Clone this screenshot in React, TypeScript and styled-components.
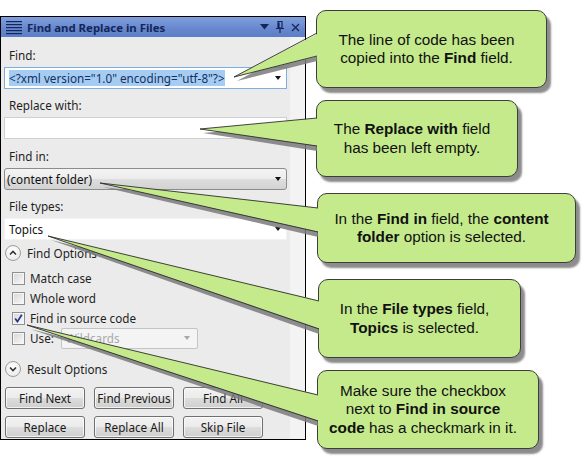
import React from 'react';
import styled, { createGlobalStyle } from 'styled-components';

const Global = createGlobalStyle`
  html, body { margin: 0; padding: 0; background: #fff; }
  body { font-family: "Noto Sans", "Open Sans", sans-serif; }
`;

const Stage = styled.div`
  position: relative;
  width: 587px;
  height: 463px;
  overflow: hidden;
  background: #fff;
  padding-top: 16px;
  box-sizing: border-box;
`;

const Panel = styled.div`
  width: 306px;
  box-sizing: border-box;
  border: 1px solid #000;
  background: #ebebeb;
  display: flex;
  flex-direction: column;
`;

const TitleBar = styled.div`
  height: 20px;
  display: flex;
  align-items: center;
  padding: 0 5px;
  gap: 5px;
  background: linear-gradient(#809fdc, #6687cd 60%, #5c7ec7);
  color: #13265a;
  font-weight: 700;
  font-size: 11.4px;
`;

const Title = styled.span`
  flex: 1;
  white-space: nowrap;
`;

const TitleIcons = styled.div`
  display: flex;
  align-items: center;
  gap: 7px;
`;

const Body = styled.div`
  display: flex;
`;

const Content = styled.div`
  flex: 1;
  display: flex;
  flex-direction: column;
  padding: 9px 3px 1px 3px;
  font-size: 11.7px;
`;

const Strip = styled.div`
  width: 15px;
  background: #f3f3f3;
`;

const Field = styled.div<{ $mt?: number }>`
  display: flex;
  flex-direction: column;
  gap: 3px;
  margin-top: ${(p) => p.$mt ?? 0}px;
`;

const Label = styled.div`
  line-height: 18px;
  height: 18px;
  padding-left: 5px;
  color: #1e1e1e;
`;

const TextBox = styled.div<{ $focus?: boolean; $plain?: boolean }>`
  height: 22px;
  box-sizing: border-box;
  display: flex;
  align-items: center;
  padding: 0 5px 0 4px;
  background: #fff;
  border: 1px solid ${(p) => (p.$focus ? '#7eaee0' : p.$plain ? '#f2f2f2' : '#cfcfcf')};
  color: #111;
  white-space: nowrap;
`;

const Combo = styled.div`
  height: 22px;
  box-sizing: border-box;
  display: flex;
  align-items: center;
  padding: 0 5px 0 2px;
  border: 1px solid #8c8c8c;
  border-radius: 3px;
  background: linear-gradient(#f4f4f4 0%, #ececec 50%, #dedede 50%, #d2d2d2 100%);
  color: #111;
  white-space: nowrap;
`;

const Selected = styled.span`
  background: #a5cdf3;
  color: #15305e;
  line-height: 16px;
`;

const Arrow = styled.span<{ $dim?: boolean }>`
  margin-left: auto;
  width: 0;
  height: 0;
  border-left: 3.5px solid transparent;
  border-right: 3.5px solid transparent;
  border-top: 4px solid ${(p) => (p.$dim ? '#a8a8a8' : '#111')};
`;

const ExpanderRow = styled.div<{ $mt: number }>`
  display: flex;
  align-items: center;
  gap: 6px;
  height: 20px;
  margin-top: ${(p) => p.$mt}px;
  padding-left: 1px;
  color: #1e1e1e;
`;

const Circle = styled.span`
  width: 16px;
  height: 16px;
  box-sizing: border-box;
  border-radius: 50%;
  border: 1px solid #9c9c9c;
  background: radial-gradient(circle at 50% 35%, #ffffff, #e6e6e6);
  display: flex;
  align-items: center;
  justify-content: center;
`;

const CheckList = styled.div`
  display: flex;
  flex-direction: column;
  margin-top: 5px;
`;

const CheckRow = styled.div`
  height: 20px;
  display: flex;
  align-items: center;
  gap: 5px;
  padding-left: 8px;
  color: #1e1e1e;
`;

const Box = styled.span`
  width: 13px;
  height: 13px;
  box-sizing: border-box;
  border: 1px solid #8e8f8f;
  box-shadow: inset 0 0 0 1px #f6f6f6;
  background: linear-gradient(135deg, #d6d6d6, #f9f9f9);
  display: flex;
  align-items: center;
  justify-content: center;
  flex-shrink: 0;
`;

const DisabledCombo = styled.div`
  margin-left: 2px;
  width: 137px;
  height: 21px;
  box-sizing: border-box;
  border: 1px solid #c4c4c4;
  border-radius: 2px;
  background: #f4f4f4;
  display: flex;
  align-items: center;
  padding: 0 7px 0 4px;
  color: #a9a9a9;
`;

const Buttons = styled.div`
  display: grid;
  grid-template-columns: repeat(3, 80px);
  column-gap: 9px;
  row-gap: 7px;
  margin-top: 8px;
  padding-left: 1px;
`;

const Button = styled.div`
  height: 22px;
  box-sizing: border-box;
  border: 1px solid #707070;
  border-radius: 3px;
  background: linear-gradient(#f2f2f2 0%, #ebebeb 50%, #dddddd 50%, #cfcfcf 100%);
  box-shadow: inset 0 0 0 1px rgba(255, 255, 255, 0.7);
  display: flex;
  align-items: center;
  justify-content: center;
  color: #1a1a1a;
  white-space: nowrap;
`;

const Overlay = styled.svg`
  position: absolute;
  left: 0;
  top: 0;
  pointer-events: none;
  z-index: 2;
`;

const Bubble = styled.div<{ $x: number; $y: number; $w: number; $h: number }>`
  position: absolute;
  left: ${(p) => p.$x}px;
  top: ${(p) => p.$y}px;
  width: ${(p) => p.$w}px;
  height: ${(p) => p.$h}px;
  box-sizing: border-box;
  border: 1px solid #3d3d3d;
  border-radius: 10px;
  background: #c5ea8c;
  box-shadow: 4px 5px 2px rgba(0, 0, 0, 0.45);
  display: flex;
  align-items: center;
  justify-content: center;
  padding: 0 12px 0 2px;
  text-align: center;
  font-family: "Liberation Sans", Arial, sans-serif;
  font-size: 15.3px;
  line-height: 18.5px;
  color: #111;
  z-index: 1;
`;

const Menu = () => (
  <svg width="16" height="15" viewBox="0 0 16 15">
    {[1, 4, 7, 10, 13].map((y) => (
      <rect key={y} x="0" y={y} width="16" height="1.2" fill="#13265a" />
    ))}
  </svg>
);

const Chevron = ({ up }: { up?: boolean }) => (
  <svg width="8" height="6" viewBox="0 0 8 6">
    <path d={up ? 'M1 4.5 L4 1.5 L7 4.5' : 'M1 1.5 L4 4.5 L7 1.5'} stroke="#333" strokeWidth="1.6" fill="none" />
  </svg>
);

const Check = () => (
  <svg width="9" height="9" viewBox="0 0 9 9">
    <path d="M1.2 4.6 L3.4 7.6 L7.8 0.8" stroke="#2b318a" strokeWidth="1.7" fill="none" />
  </svg>
);

type Tail = { tip: [number, number]; x: number; top: number; bot: number };

const tails: Tail[] = [
  { tip: [234, 77], x: 317, top: 33, bot: 56 },
  { tip: [200, 129], x: 317, top: 118, bot: 146 },
  { tip: [100, 183], x: 318, top: 208, bot: 232 },
  { tip: [48, 236], x: 319, top: 301, bot: 329 },
  { tip: [27, 325], x: 318, top: 395, bot: 421 },
];

export default function App() {
  return (
    <Stage>
      <Global />
      <Panel>
        <TitleBar>
          <Menu />
          <Title>Find and Replace in Files</Title>
          <TitleIcons>
            <svg width="9" height="6" viewBox="0 0 9 6">
              <path d="M0 0 H9 L4.5 5.5 Z" fill="#13265a" />
            </svg>
            <svg width="8" height="12" viewBox="0 0 8 12">
              <path d="M2 0.5 H6 V7 H2 Z M3 1.5 V6.5 M0 7.5 H8 M4 7.5 V12" stroke="#13265a" strokeWidth="1.2" fill="none" />
            </svg>
            <svg width="9" height="9" viewBox="0 0 9 9">
              <path d="M1 1 L8 8 M8 1 L1 8" stroke="#13265a" strokeWidth="1.3" />
            </svg>
          </TitleIcons>
        </TitleBar>
        <Body>
          <Content>
            <Field>
              <Label>Find:</Label>
              <TextBox $focus>
                <Selected>&lt;?xml version="1.0" encoding="utf-8"?&gt;</Selected>
                <Arrow />
              </TextBox>
            </Field>
            <Field $mt={7}>
              <Label>Replace with:</Label>
              <TextBox />
            </Field>
            <Field $mt={8}>
              <Label>Find in:</Label>
              <Combo>
                (content folder)
                <Arrow />
              </Combo>
            </Field>
            <Field $mt={7}>
              <Label>File types:</Label>
              <TextBox $plain>
                Topics
                <Arrow />
              </TextBox>
            </Field>
            <ExpanderRow $mt={3}>
              <Circle>
                <Chevron up />
              </Circle>
              Find Options
            </ExpanderRow>
            <CheckList>
              <CheckRow>
                <Box />
                Match case
              </CheckRow>
              <CheckRow>
                <Box />
                Whole word
              </CheckRow>
              <CheckRow>
                <Box>
                  <Check />
                </Box>
                Find in source code
              </CheckRow>
              <CheckRow>
                <Box />
                Use:
                <DisabledCombo>
                  Wildcards
                  <Arrow $dim />
                </DisabledCombo>
              </CheckRow>
            </CheckList>
            <ExpanderRow $mt={11}>
              <Circle>
                <Chevron />
              </Circle>
              Result Options
            </ExpanderRow>
            <Buttons>
              <Button>Find Next</Button>
              <Button>Find Previous</Button>
              <Button>Find All</Button>
              <Button>Replace</Button>
              <Button>Replace All</Button>
              <Button>Skip File</Button>
            </Buttons>
          </Content>
          <Strip />
        </Body>
      </Panel>

      <Bubble $x={316} $y={10} $w={231} $h={78}>
        <div>
          The line of code has been
          <br />
          copied into the <b>Find</b> field.
        </div>
      </Bubble>
      <Bubble $x={316} $y={100} $w={202} $h={77}>
        <div>
          The <b>Replace with</b> field
          <br />
          has been left empty.
        </div>
      </Bubble>
      <Bubble $x={317} $y={193} $w={259} $h={70}>
        <div>
          In the <b>Find in</b> field, the <b>content</b>
          <br />
          <b>folder</b> option is selected.
        </div>
      </Bubble>
      <Bubble $x={318} $y={279} $w={203} $h={79}>
        <div>
          In the <b>File types</b> field,
          <br />
          <b>Topics</b> is selected.
        </div>
      </Bubble>
      <Bubble $x={317} $y={370} $w={222} $h={79}>
        <div>
          Make sure the checkbox
          <br />
          next to <b>Find in source</b>
          <br />
          <b>code</b> has a checkmark in it.
        </div>
      </Bubble>

      <Overlay width="587" height="463" viewBox="0 0 587 463">
        {tails.map((t, i) => {
          const [tx, ty] = t.tip;
          return (
            <g key={i}>
              <polygon
                points={`${tx + 3},${ty + 4} ${t.x},${t.top + 5} ${t.x},${t.bot + 5}`}
                fill="#7a7a7a"
                opacity="0.85"
              />
              <polygon points={`${tx},${ty} ${t.x + 2},${t.top} ${t.x + 2},${t.bot}`} fill="#c5ea8c" />
              <path
                d={`M${t.x},${t.top} L${tx},${ty} L${t.x},${t.bot}`}
                stroke="#2e2e2e"
                strokeWidth="0.9"
                fill="none"
              />
            </g>
          );
        })}
      </Overlay>
    </Stage>
  );
}
